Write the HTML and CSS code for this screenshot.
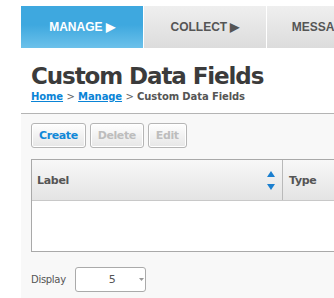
FILE: index.html
```html
<!DOCTYPE html>
<html>
<head>
<meta charset="utf-8">
<link rel="stylesheet" href="styles.css">
</head>
<body>
<div class="page">
  <nav class="nav">
    <a class="tab active">MANAGE &#9654;</a>
    <a class="tab">COLLECT &#9654;</a>
    <a class="tab">MESSAGE &#9654;</a>
  </nav>
  <header class="head">
    <h1 class="title">Custom Data Fields</h1>
    <div class="crumbs"><a class="crumb-link">Home</a> <span class="sep">&gt;</span> <a class="crumb-link">Manage</a> <span class="sep">&gt;</span> <span class="crumb-current">Custom Data Fields</span></div>
  </header>
  <section class="panel">
    <div class="toolbar">
      <button class="btn btn-primary">Create</button>
      <button class="btn btn-disabled">Delete</button>
      <button class="btn btn-disabled">Edit</button>
    </div>
    <div class="grid">
      <div class="grid-head">
        <div class="col col-label">
          <span>Label</span>
          <svg class="sort" width="8" height="21" viewBox="0 0 8 21"><path d="M4 1 L8 7 L0 7 Z" fill="#1b7fcf"/><path d="M0 14 L8 14 L4 20 Z" fill="#1b7fcf"/></svg>
        </div>
        <div class="col col-type">Type</div>
      </div>
      <div class="grid-body"></div>
    </div>
    <div class="pager">
      <span class="pager-label">Display</span>
      <div class="select"><span class="select-value">5</span><svg class="caret" width="5" height="3" viewBox="0 0 5 3"><path d="M0 0 L5 0 L2.5 3 Z" fill="#999"/></svg></div>
    </div>
  </section>
</div>
</body>
</html>
```

FILE: styles.css
```css
html, body {
  margin: 0;
  padding: 0;
  background: #fff;
  overflow: hidden;
}
body {
  font-family: "DejaVu Sans", Tahoma, sans-serif;
}
.page {
  width: 700px;
  margin: 6px 0 0 21px;
}
.nav {
  display: flex;
  height: 42px;
}
.tab {
  width: 122px;
  display: flex;
  align-items: center;
  justify-content: center;
  font-family: "Liberation Sans", Arial, sans-serif;
  font-weight: bold;
  font-size: 12px;
  color: #555;
  background: linear-gradient(#efefef, #dcdcdc);
  border-right: 1px solid #fff;
}
.tab.active {
  color: #fff;
  background: linear-gradient(#3ea8df 0%, #3ea8df 45%, #6cc1ea 100%);
}
.head {
  padding: 14px 0 10px 10px;
}
.title {
  margin: 0;
  font-size: 23px;
  font-weight: bold;
  letter-spacing: -1.1px;
  color: #3b3b3b;
  line-height: 28px;
}
.crumbs {
  margin-top: 1px;
  font-size: 10px;
  font-weight: bold;
  color: #555;
  line-height: 12px;
  letter-spacing: -0.1px;
}
.crumb-link {
  color: #0a84d6;
  text-decoration: underline;
}
.sep {
  font-weight: normal;
  color: #666;
}
.panel {
  border-top: 1px solid #b4b4b4;
  background: #f8f8f8;
  padding: 9px 0 10px 10px;
}
.toolbar {
  display: flex;
  gap: 4px;
}
.btn {
  font-family: "DejaVu Sans", Tahoma, sans-serif;
  font-weight: bold;
  font-size: 11px;
  letter-spacing: -0.4px;
  height: 25px;
  padding: 0 7px;
  border: 1px solid #b5b5b5;
  border-radius: 3px;
  background: linear-gradient(#fefefe, #e6e6e6);
  box-shadow: inset 0 0 0 1px #fff;
}
.btn-primary { color: #1188d8; }
.btn-disabled { color: #bdbdbd; }
.grid {
  margin-top: 11px;
  border: 1px solid #a9a9a9;
  background: #fff;
}
.grid-head {
  display: flex;
  height: 40px;
  border-bottom: 1px solid #c8c8c8;
  background: linear-gradient(#f8f8f8, #e4e4e4);
}
.col {
  display: flex;
  align-items: center;
  font-size: 11px;
  font-weight: bold;
  color: #555;
  letter-spacing: -0.3px;
}
.col-label {
  box-sizing: border-box;
  width: 251px;
  padding: 0 7px 0 5px;
  justify-content: space-between;
  border-right: 1px solid #b9b9b9;
}
.sort { margin-top: 1px; }
.col-type {
  padding-left: 6px;
}
.grid-body {
  height: 50px;
}
.pager {
  display: flex;
  align-items: center;
  gap: 9px;
  margin-top: 15px;
}
.pager-label {
  font-size: 10px;
  color: #555;
  letter-spacing: -0.3px;
}
.select {
  width: 69px;
  height: 23px;
  border: 1px solid #aaa;
  border-radius: 3px;
  background: #fff;
  display: flex;
  align-items: center;
}
.select-value {
  font-size: 11px;
  color: #555;
  margin-left: 33px;
}
.caret {
  margin-left: 23px;
}
```
